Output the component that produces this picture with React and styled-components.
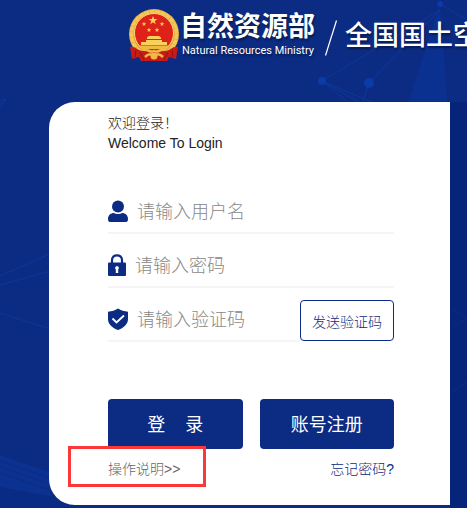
import React from "react";
import styled, { createGlobalStyle } from "styled-components";

export default function App() {
  return (
    <Page>
      <GlobalStyle />
      <Backdrop />
      <Header>
        <Emblem />
        <Brand>
          <h1>自然资源部</h1>
          <p>Natural Resources Ministry</p>
        </Brand>
        <Slash viewBox="0 0 12 36" aria-hidden="true">
          <path d="M11.5 0.5L0.5 35.5" stroke="#fff" strokeWidth="1.2" />
        </Slash>
        <SystemName>全国国土空</SystemName>
      </Header>
      <Card>
        <Welcome>
          <p>欢迎登录！</p>
          <p>Welcome To Login</p>
        </Welcome>
        <form onSubmit={(e) => e.preventDefault()}>
          <Row>
            <Field>
              <label htmlFor="username" aria-label="请输入用户名">
                <UserIcon />
              </label>
              <input id="username" type="text" placeholder="请输入用户名" />
            </Field>
          </Row>
          <Row>
            <Field>
              <label htmlFor="password" aria-label="请输入密码">
                <LockIcon />
              </label>
              <input id="password" type="password" placeholder="请输入密码" />
            </Field>
          </Row>
          <Row>
            <Field>
              <label htmlFor="code" aria-label="请输入验证码">
                <ShieldIcon />
              </label>
              <input id="code" type="text" placeholder="请输入验证码" />
            </Field>
            <CodeButton type="button">发送验证码</CodeButton>
          </Row>
          <Actions>
            <MainButton type="submit" $spaced>
              <span>登</span>
              <span>录</span>
            </MainButton>
            <MainButton type="button">账号注册</MainButton>
          </Actions>
          <Links>
            <TextLink href="#help" $color="#666" $marked>
              操作说明&gt;&gt;
            </TextLink>
            <TextLink href="#forgot" $color="#0c2b82">
              忘记密码?
            </TextLink>
          </Links>
        </form>
      </Card>
    </Page>
  );
}

function Backdrop() {
  return (
    <BackdropSvg viewBox="0 0 467 508" preserveAspectRatio="xMidYMin slice" aria-hidden="true">
      <path d="M450 102H467V508H450Z" fill="#06257a" />
      <path d="M440 4L406 110H448Z" fill="#0b3190" />
      <path d="M0 455L50 472V508H0Z" fill="#0b3191" />
      <path d="M0 487L70 500V508H0Z" fill="#092b84" />
      <g stroke="#0d389c" fill="none">
        <path d="M440 10L322 81L362 104M440 10L369 83L362 104M440 4L467 20M322 81L376 104M322 81L350 104" />
        <path d="M0 276L50 254M0 285L50 271M0 313L50 329M0 101L6 99L0 107" />
      </g>
      <g stroke="#0a2c86" fill="none">
        <path d="M0 461L50 478M0 467L50 484M0 473L50 490M0 492L48 508M0 498L30 508" />
        <path d="M453 310L467 318L453 327M451 393L467 382" />
      </g>
      <g fill="#0a3ba8">
        <circle cx="440" cy="4" r="3" />
        <circle cx="322" cy="81" r="4" />
        <circle cx="369" cy="83" r="5" />
      </g>
    </BackdropSvg>
  );
}

const star = "M0 -4L1 -1.3H4L1.6 0.5L2.5 3.4L0 1.7L-2.5 3.4L-1.6 0.5L-4 -1.3H-1Z";

function Emblem() {
  return (
    <EmblemSvg viewBox="0 0 52 54" role="img" aria-label="国徽">
      <circle cx="26" cy="26" r="25" fill="#e3ab3d" />
      <circle cx="26" cy="26" r="22.5" fill="none" stroke="#f3c75a" strokeWidth="3.4" strokeDasharray="5 0.6" />
      <circle cx="26" cy="25" r="19.5" fill="#df2219" stroke="#f6d774" strokeWidth="1" />
      <g fill="#f8d05a">
        <path d={star} transform="translate(25 12.5) scale(1.1)" />
        <path d={star} transform="translate(16 16) scale(0.6)" />
        <path d={star} transform="translate(34 16) scale(0.6)" />
        <path d={star} transform="translate(21 22) scale(0.6)" />
        <path d={star} transform="translate(29 22) scale(0.6)" />
        <path d="M19 29.5L21 28H31L33 29.500V31H19Z" />
        <path d="M18 32H34V34H39V37H13V34H18Z" />
        <path d="M10 37.500H42L39 41H13Z" fill="#eeb944" />
      </g>
      <path d="M2 39C7 38 9 42 14 43H38C43 42 45 38 50 39L48 51L41 49L39 53H13L11 49L4 51Z" fill="#c71b19" />
      <path d="M8 42L7 49M12 44L16 52M44 42L45 49M40 44L36 52" stroke="#901010" />
      <path d="M16 42C20 41 22 45 26 43C30 45 32 41 36 42M17 49C20 46 23 45 26 49C29 45 32 46 35 49" fill="none" stroke="#efbb44" strokeWidth="2.5" />
      <circle cx="26" cy="48" r="3.5" fill="#efbb44" />
    </EmblemSvg>
  );
}

function UserIcon() {
  return (
    <Icon viewBox="0 0 20 22" $width="20px">
      <ellipse cx="10" cy="6.5" rx="6" ry="6" />
      <path d="M0 19C0 15 3 13 6 13C8 14.3 12 14.3 14 13C17 13 20 15 20 19Q20 22 18 22H2Q0 22 0 19Z" />
    </Icon>
  );
}

function LockIcon() {
  return (
    <Icon viewBox="0 0 18 22" $width="18px">
      <path d="M4 9V6C4 -0.3 14 -0.3 14 6V9" fill="none" stroke="#0c2b82" strokeWidth="2.2" />
      <rect y="8.5" width="18" height="13.5" rx="1" />
      <path d="M9 12A2 2 0 0 1 10.2 15.5V19H7.8V15.5A2 2 0 0 1 9 12Z" fill="#fff" />
    </Icon>
  );
}

function ShieldIcon() {
  return (
    <Icon viewBox="0 0 20 22" $width="20px">
      <path d="M10 0.5C13 2.6 16 3.4 20 3.7V11C20 16.5 15.5 20 10 22C4.5 20 0 16.5 0 11V3.7C4 3.4 7 2.6 10 0.5Z" />
      <path d="M4.5 10.5L8.5 14.5L16 7.5" fill="none" stroke="#fff" strokeWidth="1.8" />
    </Icon>
  );
}

const GlobalStyle = createGlobalStyle`
  * {
    box-sizing: border-box;
    margin: 0;
    padding: 0;
  }
  body {
    background: #0c2b82;
    font-family: "Liberation Sans", "Noto Sans CJK SC", sans-serif;
    overflow-x: hidden;
  }
  button, input {
    font-family: inherit;
  }
`;

const Page = styled.div`
  position: relative;
  min-height: 100vh;
  overflow: hidden;
`;

const BackdropSvg = styled.svg`
  position: absolute;
  inset: 0;
  width: 100%;
  height: 100%;
`;

const Header = styled.header`
  position: relative;
  display: flex;
  align-items: flex-start;
  padding: 8px 0 0 128px;
  height: 102px;
  color: #fff;
  white-space: nowrap;
  text-shadow: 1px 2px 2px rgba(0, 0, 0, 0.4);
`;

const EmblemSvg = styled.svg`
  flex: none;
  width: 52px;
  height: 54px;
`;

const Brand = styled.div`
  padding-top: 2px;
  h1 {
    font-size: 27px;
    font-weight: 700;
    line-height: 34px;
  }
  p {
    padding-left: 2px;
    font-family: Roboto, sans-serif;
    font-size: 11px;
    line-height: 14px;
  }
`;

const Slash = styled.svg`
  flex: none;
  width: 12px;
  height: 36px;
  margin: 12px 8px 0 10px;
`;

const SystemName = styled.h2`
  font-size: 27px;
  font-weight: 500;
  line-height: 56px;
`;

const Card = styled.main`
  position: relative;
  margin: 0 17px 3px 49px;
  padding: 11px 56px 26px 59px;
  background: #fff;
  border-radius: 26px 0 0 26px;
`;

const Welcome = styled.div`
  margin-bottom: 27px;
  color: #222;
  font-size: 14px;
  font-weight: 300;
  line-height: 20px;
`;

const Row = styled.div`
  display: flex;
  align-items: flex-end;
  height: 54px;
`;

const Field = styled.div`
  flex: 1;
  min-width: 0;
  display: flex;
  align-items: center;
  gap: 9px;
  height: 44px;
  border-bottom: 2px solid #f5f5f5;
  label {
    display: flex;
  }
  input {
    flex: 1;
    min-width: 0;
    height: 42px;
    padding-top: 2px;
    border: 0;
    outline: 0;
    background: transparent;
    color: #333;
    font-size: 18px;
    &::placeholder {
      color: #888;
      font-weight: 300;
    }
  }
`;

const Icon = styled.svg`
  width: ${(p) => p.$width};
  height: 22px;
  fill: #0c2b82;
`;

const CodeButton = styled.button`
  width: 94px;
  height: 41px;
  margin-bottom: 1px;
  border: 1px solid #0c2b82;
  border-radius: 4px;
  background: #fff;
  color: #0c2b82;
  font-size: 14px;
  font-weight: 300;
`;

const Actions = styled.div`
  display: flex;
  gap: 17px;
  margin-top: 57px;
`;

const MainButton = styled.button`
  flex: 1;
  display: flex;
  align-items: center;
  justify-content: center;
  gap: ${(p) => (p.$spaced ? "20px" : "0")};
  height: 50px;
  padding-bottom: 3px;
  border: 0;
  border-radius: 4px;
  background: #0c2b82;
  color: #fff;
  font-size: 18px;
`;

const Links = styled.div`
  display: flex;
  justify-content: space-between;
  margin-top: 10px;
`;

const TextLink = styled.a`
  position: relative;
  color: ${(p) => p.$color};
  font-size: 14px;
  font-weight: 300;
  line-height: 20px;
  text-decoration: none;
  &::after {
    content: "";
    display: ${(p) => (p.$marked ? "block" : "none")};
    position: absolute;
    inset: -13px -26px -8px -40px;
    border: 3px solid #fb3838;
  }
`;
